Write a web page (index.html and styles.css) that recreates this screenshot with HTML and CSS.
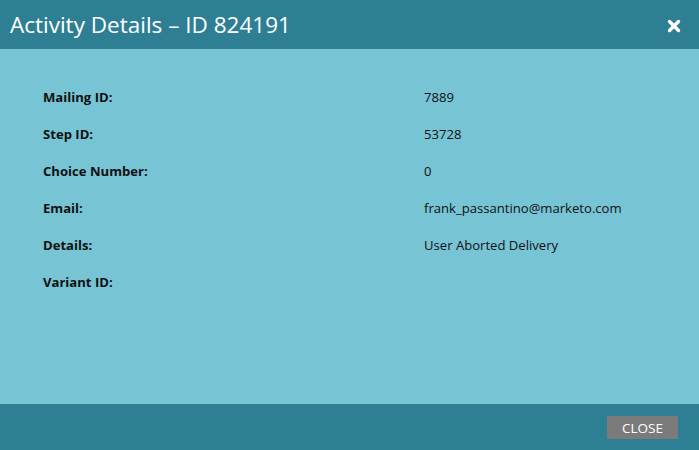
FILE: index.html
```html
<!DOCTYPE html>
<html>
<head>
<meta charset="utf-8">
<link rel="stylesheet" href="styles.css">
</head>
<body>
<div class="dialog">
  <header class="head">
    <h1 class="title">Activity Details – ID 824191</h1>
    <span class="close-x">
      <svg width="14" height="14" viewBox="0 0 14 14"><path d="M2.5 2.5 L11.5 11.5 M11.5 2.5 L2.5 11.5" stroke="#fff" stroke-width="3.4" stroke-linecap="round"/></svg>
    </span>
  </header>
  <main class="body">
    <div class="grid">
      <div class="label">Mailing ID:</div><div class="value">7889</div>
      <div class="label">Step ID:</div><div class="value">53728</div>
      <div class="label">Choice Number:</div><div class="value">0</div>
      <div class="label">Email:</div><div class="value">frank_passantino@marketo.com</div>
      <div class="label">Details:</div><div class="value">User Aborted Delivery</div>
      <div class="label">Variant ID:</div><div class="value"></div>
    </div>
  </main>
  <footer class="foot">
    <button class="btn">CLOSE</button>
  </footer>
</div>
</body>
</html>
```

FILE: styles.css
```css
* { box-sizing: border-box; }
html, body { margin: 0; padding: 0; }
body { width: 699px; height: 450px; overflow: hidden; font-family: "Open Sans", sans-serif; }
.dialog { display: flex; flex-direction: column; height: 450px; background: #77c4d5; }
.head { height: 49px; background: #2e7f94; display: flex; align-items: center; justify-content: space-between; padding: 0 18px 0 10px; }
.title { margin: 0; font-weight: 400; font-size: 22.5px; color: #fff; letter-spacing: 0; }
.close-x { display: flex; width: 14px; height: 14px; margin-top: 2px; }
.body { flex: 1; padding: 39px 0 0 43px; }
.grid { display: grid; grid-template-columns: 381px 1fr; row-gap: 19px; font-size: 13.1px; line-height: 18px; color: #111; }
.label { font-weight: 700; }
.value { min-height: 18px; }
.foot { height: 46px; background: #2e7f94; display: flex; align-items: center; justify-content: flex-end; padding: 0 21px 0 0; }
.btn { width: 71px; height: 23px; border: none; background: #7b7b7b; color: #fff; font-family: "Open Sans", sans-serif; font-size: 13.5px; padding: 0; margin-top: 1px; }
```
